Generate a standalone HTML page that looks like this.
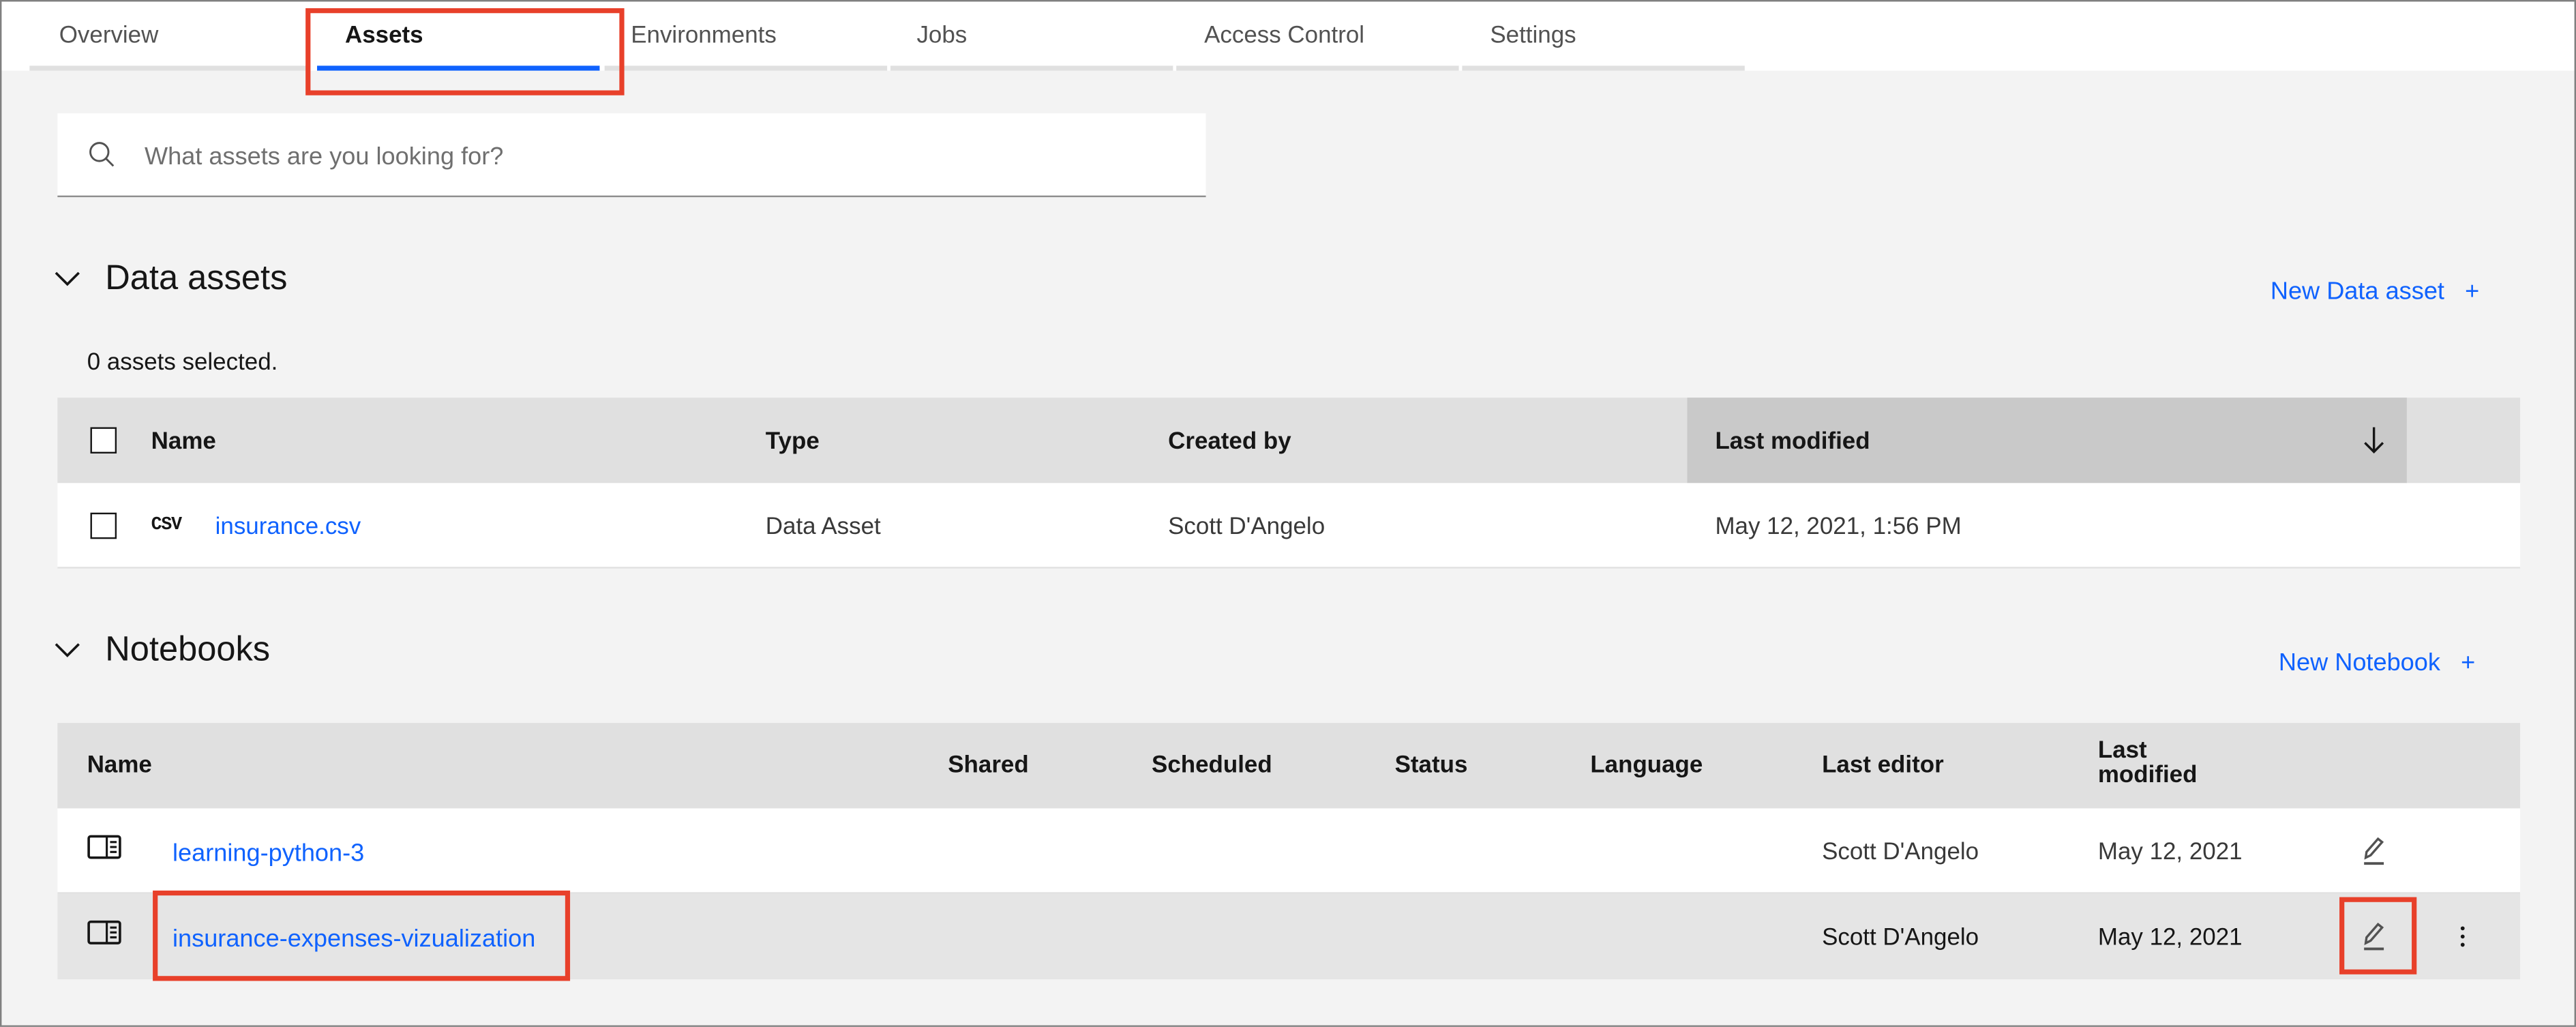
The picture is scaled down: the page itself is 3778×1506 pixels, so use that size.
<!DOCTYPE html>
<html><head><meta charset="utf-8"><style>
html,body{margin:0;padding:0;width:3778px;height:1506px;overflow:hidden;background:#f3f3f3}
#s{position:absolute;left:0;top:0;width:1568px;height:625px;transform:scale(2.40944);transform-origin:0 0;background:#f3f3f3;font-family:"Liberation Sans",sans-serif;color:#161616;overflow:hidden}
.a{position:absolute;white-space:nowrap}
.t{font-size:14.5px;color:#525252}
.h{font-size:14.5px;font-weight:bold;color:#161616}
.c{font-size:14.5px;color:#393939}
.l{font-size:14.5px;color:#0f62fe}
.box{position:absolute;border:3px solid #e8402a;box-sizing:border-box}
.cb{position:absolute;width:16px;height:16px;border:1.5px solid #161616;box-sizing:border-box;background:#fff}
</style></head><body><div id="s">
<div class="a" style="left:0;top:0;width:1568px;height:43px;background:#fff"></div>
<div class="a" style="left:18px;top:40px;width:170px;height:3px;background:#e0e0e0"></div>
<div class="a" style="left:368px;top:40px;width:172px;height:3px;background:#e0e0e0"></div>
<div class="a" style="left:542px;top:40px;width:172px;height:3px;background:#e0e0e0"></div>
<div class="a" style="left:716px;top:40px;width:172px;height:3px;background:#e0e0e0"></div>
<div class="a" style="left:890px;top:40px;width:172px;height:3px;background:#e0e0e0"></div>
<div class="a" style="left:193px;top:40px;width:172px;height:3px;background:#0f62fe"></div>
<div class="a t" style="left:36px;top:14px">Overview</div>
<div class="a h" style="left:210px;top:14px">Assets</div>
<div class="a t" style="left:384px;top:14px">Environments</div>
<div class="a t" style="left:558px;top:14px">Jobs</div>
<div class="a t" style="left:733px;top:14px">Access Control</div>
<div class="a t" style="left:907px;top:14px">Settings</div>
<div class="box" style="left:186px;top:5px;width:194px;height:53px"></div>

<div class="a" style="left:35px;top:69px;width:699px;height:50px;background:#fff;border-bottom:1.5px solid #8d8d8d"></div>
<svg class="a" style="left:53px;top:85px" width="18" height="18" viewBox="0 0 18 18"><circle cx="7.5" cy="7.5" r="5.5" fill="none" stroke="#525252" stroke-width="1.2"/><path d="M11.5 11.5L16 16" stroke="#525252" stroke-width="1.2"/></svg>
<div class="a t" style="left:88px;top:87px;font-size:15px;color:#6f6f6f">What assets are you looking for?</div>

<svg class="a" style="left:33px;top:164px" width="16" height="12"><path d="M1 2L8 9L15 2" fill="none" stroke="#161616" stroke-width="1.5"/></svg>
<div class="a" style="left:64px;top:158px;font-size:21px">Data assets</div>
<div class="a l" style="left:1382px;top:169px;font-size:15px">New Data asset&nbsp;&nbsp;&nbsp;+</div>
<div class="a" style="left:53px;top:213px;font-size:14.5px">0 assets selected.</div>

<div class="a" style="left:35px;top:242px;width:1499px;height:52px;background:#e0e0e0"></div>
<div class="a" style="left:1027px;top:242px;width:438px;height:52px;background:#c9c9c9"></div>
<div class="cb" style="left:55px;top:260px"></div>
<div class="a h" style="left:92px;top:261px">Name</div>
<div class="a h" style="left:466px;top:261px">Type</div>
<div class="a h" style="left:711px;top:261px">Created by</div>
<div class="a h" style="left:1044px;top:261px">Last modified</div>
<svg class="a" style="left:1437px;top:259px" width="16" height="18"><path d="M8 1V16M2.5 10.5L8 16L13.5 10.5" fill="none" stroke="#161616" stroke-width="1.4"/></svg>
<div class="a" style="left:35px;top:294px;width:1499px;height:51px;background:#fff;border-bottom:1px solid #e0e0e0"></div>
<div class="cb" style="left:55px;top:312px"></div>
<div class="a" style="left:92px;top:314px;font-family:'Liberation Mono',monospace;font-size:11px;font-weight:bold;letter-spacing:-0.5px">CSV</div>
<div class="a l" style="left:131px;top:313px">insurance.csv</div>
<div class="a c" style="left:466px;top:313px">Data Asset</div>
<div class="a c" style="left:711px;top:313px">Scott D'Angelo</div>
<div class="a c" style="left:1044px;top:313px">May 12, 2021, 1:56 PM</div>

<svg class="a" style="left:33px;top:390px" width="16" height="12"><path d="M1 2L8 9L15 2" fill="none" stroke="#161616" stroke-width="1.5"/></svg>
<div class="a" style="left:64px;top:384px;font-size:21px">Notebooks</div>
<div class="a l" style="left:1387px;top:395px;font-size:15px">New Notebook&nbsp;&nbsp;&nbsp;+</div>

<div class="a" style="left:35px;top:440px;width:1499px;height:52px;background:#e0e0e0"></div>
<div class="a h" style="left:53px;top:458px">Name</div>
<div class="a h" style="left:577px;top:458px">Shared</div>
<div class="a h" style="left:701px;top:458px">Scheduled</div>
<div class="a h" style="left:849px;top:458px">Status</div>
<div class="a h" style="left:968px;top:458px">Language</div>
<div class="a h" style="left:1109px;top:458px">Last editor</div>
<div class="a h" style="left:1277px;top:450px;line-height:15px">Last<br>modified</div>

<div class="a" style="left:35px;top:492px;width:1499px;height:51px;background:#fff;border-bottom:1px solid #e0e0e0"></div>
<div class="a" style="left:35px;top:544px;width:1499px;height:52px;background:#e5e5e5"></div>
<svg class="a" style="left:53px;top:508px" width="22" height="16" viewBox="0 0 22 16"><rect x="1" y="1" width="19" height="13" rx="1.2" fill="none" stroke="#161616" stroke-width="1.5"/><path d="M12 1V14M14 4.5H18M14 7.5H18M14 10.5H18" stroke="#161616" stroke-width="1.3"/></svg>
<svg class="a" style="left:53px;top:560px" width="22" height="16" viewBox="0 0 22 16"><rect x="1" y="1" width="19" height="13" rx="1.2" fill="none" stroke="#161616" stroke-width="1.5"/><path d="M12 1V14M14 4.5H18M14 7.5H18M14 10.5H18" stroke="#161616" stroke-width="1.3"/></svg>
<div class="a l" style="left:105px;top:511px;font-size:15px">learning-python-3</div>
<div class="a l" style="left:105px;top:563px;font-size:15px">insurance-expenses-vizualization</div>
<div class="a c" style="left:1109px;top:511px">Scott D'Angelo</div>
<div class="a c" style="left:1277px;top:511px">May 12, 2021</div>
<div class="a c" style="left:1109px;top:563px;color:#161616">Scott D'Angelo</div>
<div class="a c" style="left:1277px;top:563px;color:#161616">May 12, 2021</div>
<svg class="a" style="left:1437px;top:508px" width="20" height="20" viewBox="0 0 20 20"><path d="M3 14L3.5 10.5L10.5 2.5L13 4.5L6 12.5Z" fill="none" stroke="#525252" stroke-width="1.4"/><path d="M2 17.5H14" stroke="#525252" stroke-width="1.6"/></svg>
<svg class="a" style="left:1437px;top:560px" width="20" height="20" viewBox="0 0 20 20"><path d="M3 14L3.5 10.5L10.5 2.5L13 4.5L6 12.5Z" fill="none" stroke="#525252" stroke-width="1.4"/><path d="M2 17.5H14" stroke="#525252" stroke-width="1.6"/></svg>
<svg class="a" style="left:1496px;top:562px" width="6" height="16"><circle cx="3" cy="3" r="1.2" fill="#161616"/><circle cx="3" cy="8" r="1.2" fill="#161616"/><circle cx="3" cy="13" r="1.2" fill="#161616"/></svg>
<div class="box" style="left:93px;top:542px;width:254px;height:55px"></div>
<div class="box" style="left:1424px;top:546px;width:47px;height:47px"></div>

<div class="a" style="left:0;top:0;width:1568px;height:625px;border:1px solid #808080;box-sizing:border-box"></div>
</div></body></html>
